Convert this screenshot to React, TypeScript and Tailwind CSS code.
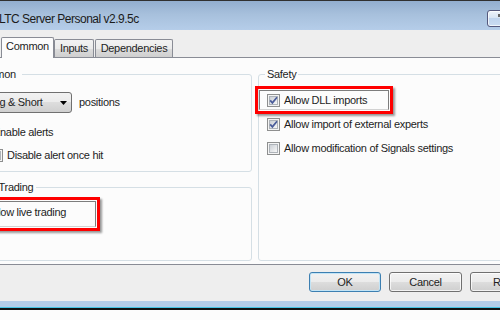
import React from "react";

function Check({ checked }: { checked?: boolean }) {
  return (
    <div className="w-[13px] h-[13px] shrink-0 border border-[#8e8f8f] bg-[#f4f4f4] p-[1px]">
      <div className="relative w-full h-full border border-[#aeb3b9] bg-[linear-gradient(135deg,#cbcfd5,#f7f7f7)]">
        {checked && (
          <svg className="absolute -left-[2px] -top-[2px]" width="11" height="11" viewBox="0 0 11 11">
            <path d="M2.2 5.4 L4.4 7.9 L9 2.3" fill="none" stroke="#4a5c9a" strokeWidth="1.7" />
          </svg>
        )}
      </div>
    </div>
  );
}

function Row({
  checked,
  label,
  className,
  children,
}: {
  checked?: boolean;
  label: string;
  className?: string;
  children?: React.ReactNode;
}) {
  return (
    <div className={"relative flex items-start gap-[4px] " + (className ?? "")}>
      {children}
      <Check checked={checked} />
      <span className="leading-[13px] whitespace-nowrap">{label}</span>
    </div>
  );
}

function Highlight({ className }: { className: string }) {
  return (
    <div
      className={
        "absolute border-[3px] border-[#ff0000] shadow-[2px_2px_2px_rgba(0,0,0,0.4)] pointer-events-none " +
        className
      }
    >
      <div className="absolute inset-[1px] border border-[#7d7d7d] border-b-[#d2d2d2]" />
    </div>
  );
}

function Btn({ label, primary, w }: { label: string; primary?: boolean; w: string }) {
  return (
    <div
      className={
        "h-[20px] rounded-[3px] border flex items-center justify-center leading-[13px] bg-[linear-gradient(#f2f2f2,#ebebeb_50%,#dddddd_50%,#cfcfcf)] " +
        w +
        (primary
          ? " border-[#3c7fb1] shadow-[inset_0_0_0_1px_#c2e4f6]"
          : " border-[#707070] shadow-[inset_0_0_0_1px_rgba(255,255,255,0.75)]")
      }
    >
      {label}
    </div>
  );
}

export default function App() {
  return (
    <div className="w-[500px] h-[320px] overflow-hidden bg-[#fcfcfc] font-['Liberation_Sans',Arial,sans-serif] text-[11px] tracking-[-0.3px] text-[#1e1e1e]">
      {/* title bar */}
      <div className="h-[30px] border-t border-[#303030] bg-[linear-gradient(#92aecf,#a7c0dc_45%,#b5cde9)] flex">
        <div className="-ml-[1px] mt-[11px] text-[12px] leading-[14px] tracking-[-0.5px] text-[#1b1b1b] whitespace-nowrap">
          LTC Server Personal v2.9.5c
        </div>
        <div className="relative ml-auto -mr-[17px] mt-[9px] w-[30px] h-[17px] border border-[#55597d] rounded-[3px] bg-[linear-gradient(#eef3fa,#d6e3f2_50%,#c0d4ed_50%,#cadcf2)] shadow-[inset_0_0_0_1px_rgba(255,255,255,0.7)]">
          <div className="absolute left-[10px] top-[3px] w-[2px] h-[3px] bg-[#666]" />
        </div>
      </div>

      {/* tabs */}
      <div className="h-[27px] bg-[#eeeeee] flex items-end pl-[1px]">
        <div className="relative z-10 w-[53px] h-[21px] -mb-px bg-[#fcfcfc] border border-b-0 border-[#898c95] rounded-t-[2px] flex justify-center pt-[2px] leading-[13px]">
          Common
        </div>
        <div className="w-[40px] h-[18px] border border-b-0 border-[#898c95] rounded-t-[2px] bg-[linear-gradient(#f2f2f2,#ebebeb_50%,#dddddd_50%,#cfcfcf)] flex justify-center pt-[2px] leading-[13px]">
          Inputs
        </div>
        <div className="ml-[1px] w-[78px] h-[18px] border border-b-0 border-[#898c95] rounded-t-[2px] bg-[linear-gradient(#f2f2f2,#ebebeb_50%,#dddddd_50%,#cfcfcf)] flex justify-center pt-[2px] leading-[13px]">
          Dependencies
        </div>
      </div>

      {/* panel */}
      <div className="h-[208px] border-t border-b border-[#898c95] bg-[#fcfcfc]">
        <div className="flex gap-[6px] -ml-[35px] pt-[10px]">
          {/* left column */}
          <div className="w-[287px] shrink-0 flex flex-col">
            <fieldset className="h-[104px] border border-[#d5dfe5] rounded-[3px]">
              <legend className="ml-[5px] pl-[2px] pr-[6px] leading-[12px]">Common</legend>
              <div className="pl-[10px] flex flex-col items-start">
                <div className="mt-[12px] flex items-center">
                  <div className="w-[96px] h-[21px] border border-[#707070] rounded-[3px] bg-[linear-gradient(#f2f2f2,#ebebeb_50%,#dddddd_50%,#cfcfcf)] flex items-center pl-[5px] pr-[4px]">
                    <span className="leading-[13px] whitespace-nowrap">Long &amp; Short</span>
                    <svg className="ml-auto" width="7" height="4" viewBox="0 0 7 4">
                      <path d="M0 0H7L3.5 4Z" fill="#000" />
                    </svg>
                  </div>
                  <span className="ml-[7px] leading-[13px]">positions</span>
                </div>
                <Row className="mt-[13px]" label="Enable alerts" />
                <Row className="mt-[10px] ml-[14px]" label="Disable alert once hit" />
              </div>
            </fieldset>
            <fieldset className="mt-[9px] h-[80px] border border-[#d5dfe5] rounded-[3px]">
              <legend className="ml-[9px] pl-[2px] pr-[3px] leading-[12px]">Live Trading</legend>
              <div className="pl-[6px] flex flex-col items-start">
                <Row className="mt-[13px]" checked label="Allow live trading">
                  <Highlight className="-left-[20px] -top-[9px] w-[148px] h-[34px]" />
                </Row>
              </div>
            </fieldset>
          </div>

          {/* right column */}
          <div className="w-[300px] shrink-0">
            <fieldset className="h-[193px] border border-[#d5dfe5] rounded-[3px]">
              <legend className="ml-[6px] px-[2px] leading-[12px]">Safety</legend>
              <div className="pl-[8px] flex flex-col items-start">
                <Row className="mt-[14px]" checked label="Allow DLL imports">
                  <Highlight className="-left-[12px] -top-[8px] w-[138px] h-[28px]" />
                </Row>
                <Row className="mt-[11px]" checked label="Allow import of external experts" />
                <Row className="mt-[11px]" label="Allow modification of Signals settings" />
              </div>
            </fieldset>
          </div>
        </div>
      </div>

      {/* buttons */}
      <div className="h-[36px] bg-[#eeeeee] flex items-start pl-[309px] pt-[7px] gap-[8px]">
        <Btn primary label="OK" w="w-[72px] shrink-0" />
        <Btn label="Cancel" w="w-[73px] shrink-0" />
        <Btn label="Reset" w="w-[73px] shrink-0" />
      </div>
      <div className="h-[6px] bg-[#b3cde8]" />
      <div className="h-px bg-[#45c4e3]" />
      <div className="h-[2px] bg-[#111111]" />
    </div>
  );
}
